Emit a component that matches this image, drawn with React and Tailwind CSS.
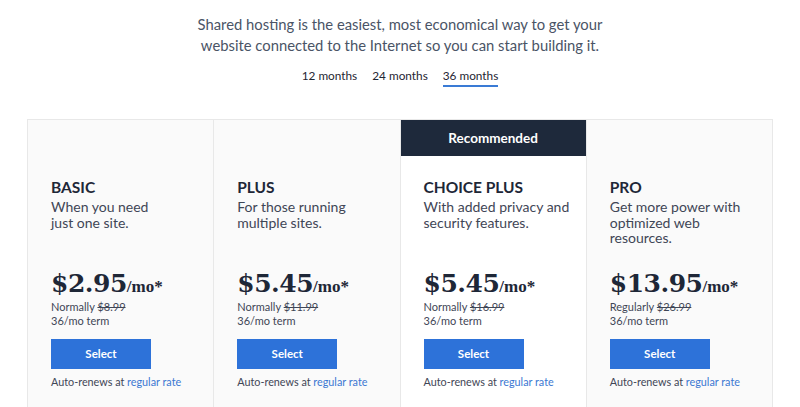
import React from "react";

const plans = [
  { name: "BASIC", desc: ["When you need", "just one site."], price: "$2.95", label: "Normally", old: "$8.99" },
  { name: "PLUS", desc: ["For those running", "multiple sites."], price: "$5.45", label: "Normally", old: "$11.99" },
  { name: "CHOICE PLUS", desc: ["With added privacy and", "security features."], price: "$5.45", label: "Normally", old: "$16.99", rec: true },
  { name: "PRO", desc: ["Get more power with", "optimized web", "resources."], price: "$13.95", label: "Regularly", old: "$26.99" },
];

export default function App() {
  return (
    <div className="w-[800px] h-[407px] overflow-hidden bg-white" style={{ fontFamily: 'Lato, "Noto Sans", sans-serif' }}>
      <div className="pt-[14px] text-center text-[14.8px] leading-[21px] text-[#4a5466]">
        <p>Shared hosting is the easiest, most economical way to get your</p>
        <p>website connected to the Internet so you can start building it.</p>
      </div>
      <div className="mt-[12px] flex justify-center gap-[15px] text-[11.8px] leading-[16px] text-[#1f2633]">
        <span className="pb-[3px]">12 months</span>
        <span className="pb-[3px]">24 months</span>
        <span className="pb-[1px] border-b-2 border-[#3a7bd5]">36 months</span>
      </div>
      <div className="mt-[32px] ml-[27px] w-[746px] grid grid-cols-4 border-l border-t border-[#e8e8e8]">
        {plans.map((p) => (
          <div key={p.name} className={`h-[300px] border-r border-[#e8e8e8] ${p.rec ? "bg-white" : "bg-[#fafafa]"}`}>
            <div className={`h-[36px] flex items-center justify-center text-[13.5px] font-bold ${p.rec ? "bg-[#1e293b] text-white" : ""}`}>
              {p.rec ? "Recommended" : ""}
            </div>
            <div className="pl-[23px] pt-[22px]">
              <div className="text-[15.5px] leading-[18px] font-bold text-[#1e2737]">{p.name}</div>
              <div className="mt-[3px] text-[14px] leading-[15.5px] text-[#3f4656] h-[47px]">
                {p.desc.map((d) => (
                  <div key={d}>{d}</div>
                ))}
              </div>
              <div className="mt-[24px] flex items-baseline text-[#1e2737] font-bold">
                <span className="text-[25px] leading-[28px] tracking-[-0.5px]" style={{ fontFamily: '"DejaVu Serif", "Liberation Serif", serif' }}>{p.price}</span>
                <span className="text-[17px]" style={{ fontFamily: '"Liberation Serif", serif' }}>/mo*</span>
              </div>
              <div className="mt-[0px] text-[11px] leading-[14px] text-[#3f4656]">
                {p.label} <span className="line-through">{p.old}</span>
              </div>
              <div className="text-[11px] leading-[14px] text-[#3f4656]">36/mo term</div>
              <button className="mt-[11px] w-[100px] h-[30px] bg-[#2d72d9] text-white text-[11.5px] font-bold">Select</button>
              <div className="mt-[6px] text-[10.8px] leading-[14px] text-[#3f4656]">
                Auto-renews at <span className="text-[#3b78d2]">regular rate</span>
              </div>
            </div>
          </div>
        ))}
      </div>
    </div>
  );
}
